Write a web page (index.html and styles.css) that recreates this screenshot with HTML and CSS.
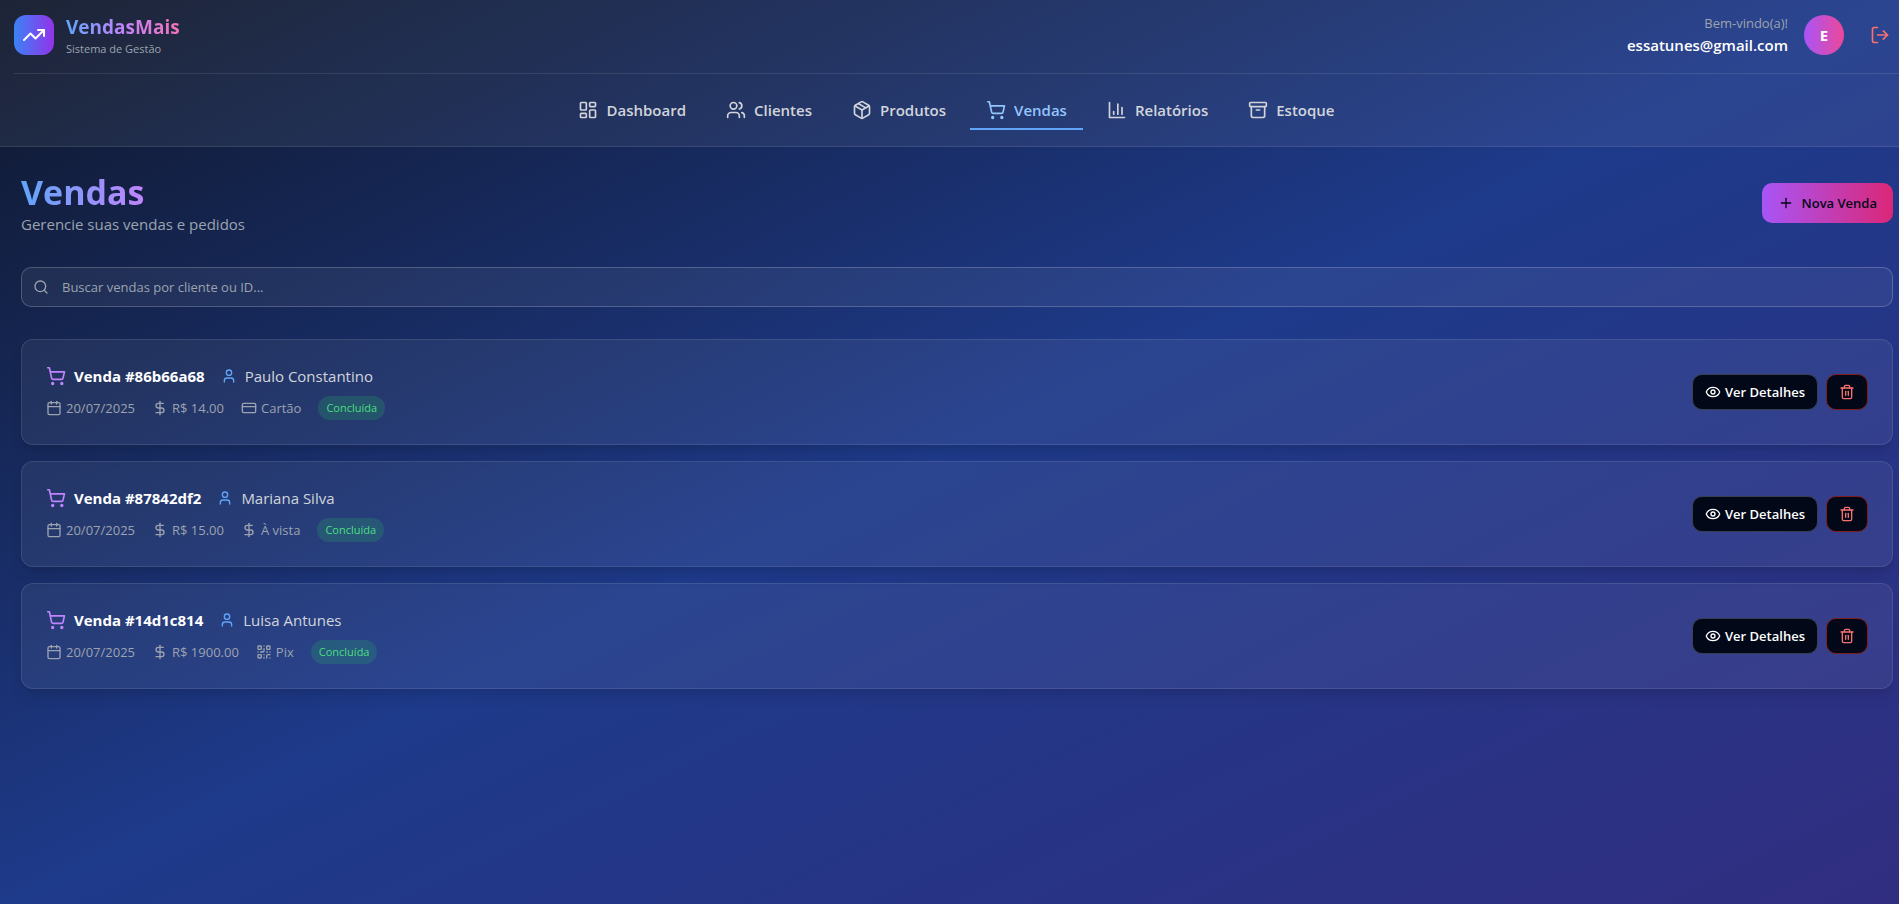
FILE: index.html
```html
<!DOCTYPE html>
<html lang="pt-BR">
<head>
<meta charset="utf-8">
<meta name="viewport" content="width=device-width, initial-scale=1">
<title>VendasMais</title>
<link rel="stylesheet" href="styles.css">
</head>
<body>
<svg class="sprite" aria-hidden="true">
  <symbol id="i-trend" viewBox="0 0 24 24"><path d="M22 7l-8.5 8.5-5-5L2 17"/><path d="M16 7h6v6"/></symbol>
  <symbol id="i-logout" viewBox="0 0 24 24"><path d="M9 21H5a2 2 0 0 1-2-2V5a2 2 0 0 1 2-2h4"/><path d="M16 17l5-5-5-5"/><path d="M21 12H9"/></symbol>
  <symbol id="i-dash" viewBox="0 0 24 24"><rect width="7" height="9" x="3" y="3" rx="1"/><rect width="7" height="5" x="14" y="3" rx="1"/><rect width="7" height="9" x="14" y="12" rx="1"/><rect width="7" height="5" x="3" y="16" rx="1"/></symbol>
  <symbol id="i-clients" viewBox="0 0 24 24"><path d="M16 21v-2a4 4 0 0 0-4-4H6a4 4 0 0 0-4 4v2"/><circle cx="9" cy="7" r="4"/><path d="M22 21v-2a4 4 0 0 0-3-3.87"/><path d="M16 3.13a4 4 0 0 1 0 7.75"/></symbol>
  <symbol id="i-package" viewBox="0 0 24 24"><path d="M7.5 4.27l9 5.15"/><path d="M21 8a2 2 0 0 0-1-1.73l-7-4a2 2 0 0 0-2 0l-7 4A2 2 0 0 0 3 8v8a2 2 0 0 0 1 1.73l7 4a2 2 0 0 0 2 0l7-4A2 2 0 0 0 21 16Z"/><path d="M3.3 7l8.7 5 8.7-5"/><path d="M12 22V12"/></symbol>
  <symbol id="i-cart" viewBox="0 0 24 24"><circle cx="8" cy="21" r="1"/><circle cx="19" cy="21" r="1"/><path d="M2.05 2.05h2l2.66 12.42a2 2 0 0 0 2 1.58h9.78a2 2 0 0 0 1.95-1.57l1.65-7.43H5.12"/></symbol>
  <symbol id="i-chart" viewBox="0 0 24 24"><path d="M3 3v18h18"/><path d="M18 17V9"/><path d="M13 17V5"/><path d="M8 17v-3"/></symbol>
  <symbol id="i-archive" viewBox="0 0 24 24"><rect width="20" height="5" x="2" y="3" rx="1"/><path d="M4 8v11a2 2 0 0 0 2 2h12a2 2 0 0 0 2-2V8"/><path d="M10 12h4"/></symbol>
  <symbol id="i-plus" viewBox="0 0 24 24"><path d="M5 12h14"/><path d="M12 5v14"/></symbol>
  <symbol id="i-search" viewBox="0 0 24 24"><circle cx="11" cy="11" r="8"/><path d="M21 21l-4.3-4.3"/></symbol>
  <symbol id="i-user" viewBox="0 0 24 24"><path d="M19 21v-2a4 4 0 0 0-4-4H9a4 4 0 0 0-4 4v2"/><circle cx="12" cy="7" r="4"/></symbol>
  <symbol id="i-calendar" viewBox="0 0 24 24"><path d="M8 2v4"/><path d="M16 2v4"/><rect width="18" height="18" x="3" y="4" rx="2"/><path d="M3 10h18"/></symbol>
  <symbol id="i-dollar" viewBox="0 0 24 24"><path d="M12 2v20"/><path d="M17 5H9.5a3.5 3.5 0 0 0 0 7h5a3.5 3.5 0 0 1 0 7H6"/></symbol>
  <symbol id="i-card" viewBox="0 0 24 24"><rect width="20" height="14" x="2" y="5" rx="2"/><path d="M2 10h20"/></symbol>
  <symbol id="i-qr" viewBox="0 0 24 24"><rect width="5" height="5" x="3" y="3" rx="1"/><rect width="5" height="5" x="16" y="3" rx="1"/><rect width="5" height="5" x="3" y="16" rx="1"/><path d="M21 16h-3a2 2 0 0 0-2 2v3"/><path d="M21 21v.01"/><path d="M12 7v3a2 2 0 0 1-2 2H7"/><path d="M3 12h.01"/><path d="M12 3h.01"/><path d="M12 16v.01"/><path d="M16 12h1"/><path d="M21 12v.01"/><path d="M12 21v-1"/></symbol>
  <symbol id="i-eye" viewBox="0 0 24 24"><path d="M2.06 12.35a1 1 0 0 1 0-.7 10.75 10.75 0 0 1 19.88 0 1 1 0 0 1 0 .7 10.75 10.75 0 0 1-19.88 0"/><circle cx="12" cy="12" r="3"/></symbol>
  <symbol id="i-trash" viewBox="0 0 24 24"><path d="M3 6h18"/><path d="M19 6v14a2 2 0 0 1-2 2H7a2 2 0 0 1-2-2V6"/><path d="M8 6V4a2 2 0 0 1 2-2h4a2 2 0 0 1 2 2v2"/><path d="M10 11v6"/><path d="M14 11v6"/></symbol>
</svg>
<div class="page">
  <header class="header">
    <div class="topbar">
      <div class="brand">
        <span class="logo"><svg class="icon icon-logo"><use href="#i-trend"/></svg></span>
        <div>
          <div class="brand-name">VendasMais</div>
          <div class="brand-sub">Sistema de Gestão</div>
        </div>
      </div>
      <div class="account">
        <div class="account-text">
          <div class="welcome">Bem-vindo(a)!</div>
          <div class="email">essatunes@gmail.com</div>
        </div>
        <span class="avatar">E</span>
        <button class="logout" type="button" aria-label="Sair"><svg class="icon icon-md"><use href="#i-logout"/></svg></button>
      </div>
    </div>
    <nav class="nav" aria-label="Principal">
      <a class="nav-link" href="#dashboard"><svg class="icon icon-md"><use href="#i-dash"/></svg>Dashboard</a>
      <a class="nav-link" href="#clientes"><svg class="icon icon-md"><use href="#i-clients"/></svg>Clientes</a>
      <a class="nav-link" href="#produtos"><svg class="icon icon-md"><use href="#i-package"/></svg>Produtos</a>
      <a class="nav-link nav-active" href="#vendas" aria-current="page"><svg class="icon icon-md"><use href="#i-cart"/></svg>Vendas</a>
      <a class="nav-link" href="#relatorios"><svg class="icon icon-md"><use href="#i-chart"/></svg>Relatórios</a>
      <a class="nav-link" href="#estoque"><svg class="icon icon-md"><use href="#i-archive"/></svg>Estoque</a>
    </nav>
  </header>

  <main class="main">
    <div class="heading">
      <div>
        <h1 class="title">Vendas</h1>
        <p class="lead">Gerencie suas vendas e pedidos</p>
      </div>
      <button class="btn-new" type="button"><svg class="icon"><use href="#i-plus"/></svg>Nova Venda</button>
    </div>

    <div class="search">
      <svg class="icon search-icon"><use href="#i-search"/></svg>
      <input class="search-input" type="text" aria-label="Buscar vendas" placeholder="Buscar vendas por cliente ou ID...">
    </div>

    <div class="list">
      <article class="sale">
        <div class="sale-info">
          <div class="sale-top">
            <svg class="icon icon-md icon-purple"><use href="#i-cart"/></svg>
            <h2 class="sale-id">Venda #86b66a68</h2>
            <svg class="icon icon-client"><use href="#i-user"/></svg>
            <span class="client">Paulo Constantino</span>
          </div>
          <div class="sale-meta">
            <span class="meta"><svg class="icon"><use href="#i-calendar"/></svg>20/07/2025</span>
            <span class="meta"><svg class="icon"><use href="#i-dollar"/></svg>R$ 14.00</span>
            <span class="meta"><svg class="icon"><use href="#i-card"/></svg>Cartão</span>
            <span class="badge">Concluída</span>
          </div>
        </div>
        <div class="actions">
          <button class="btn" type="button"><svg class="icon"><use href="#i-eye"/></svg>Ver Detalhes</button>
          <button class="btn btn-delete" type="button" aria-label="Excluir venda"><svg class="icon"><use href="#i-trash"/></svg></button>
        </div>
      </article>

      <article class="sale">
        <div class="sale-info">
          <div class="sale-top">
            <svg class="icon icon-md icon-purple"><use href="#i-cart"/></svg>
            <h2 class="sale-id">Venda #87842df2</h2>
            <svg class="icon icon-client"><use href="#i-user"/></svg>
            <span class="client">Mariana Silva</span>
          </div>
          <div class="sale-meta">
            <span class="meta"><svg class="icon"><use href="#i-calendar"/></svg>20/07/2025</span>
            <span class="meta"><svg class="icon"><use href="#i-dollar"/></svg>R$ 15.00</span>
            <span class="meta"><svg class="icon"><use href="#i-dollar"/></svg>À vista</span>
            <span class="badge">Concluída</span>
          </div>
        </div>
        <div class="actions">
          <button class="btn" type="button"><svg class="icon"><use href="#i-eye"/></svg>Ver Detalhes</button>
          <button class="btn btn-delete" type="button" aria-label="Excluir venda"><svg class="icon"><use href="#i-trash"/></svg></button>
        </div>
      </article>

      <article class="sale">
        <div class="sale-info">
          <div class="sale-top">
            <svg class="icon icon-md icon-purple"><use href="#i-cart"/></svg>
            <h2 class="sale-id">Venda #14d1c814</h2>
            <svg class="icon icon-client"><use href="#i-user"/></svg>
            <span class="client">Luisa Antunes</span>
          </div>
          <div class="sale-meta">
            <span class="meta"><svg class="icon"><use href="#i-calendar"/></svg>20/07/2025</span>
            <span class="meta"><svg class="icon"><use href="#i-dollar"/></svg>R$ 1900.00</span>
            <span class="meta"><svg class="icon"><use href="#i-qr"/></svg>Pix</span>
            <span class="badge">Concluída</span>
          </div>
        </div>
        <div class="actions">
          <button class="btn" type="button"><svg class="icon"><use href="#i-eye"/></svg>Ver Detalhes</button>
          <button class="btn btn-delete" type="button" aria-label="Excluir venda"><svg class="icon"><use href="#i-trash"/></svg></button>
        </div>
      </article>
    </div>
  </main>
</div>
</body>
</html>
```
FILE: styles.css
```css
*, *::before, *::after { box-sizing: border-box; }
body {
  margin: 0;
  font-family: "Open Sans", "Noto Sans", sans-serif;
  font-size: 15px;
  line-height: 24px;
  color: #fff;
}
h1, h2, p { margin: 0; }
button, input { font: inherit; margin: 0; }
button { cursor: pointer; }

.sprite { display: none; }
.page {
  min-height: 100vh;
  background: linear-gradient(to bottom right, #0f172a, #1e3a8a, #312e81);
}

.icon {
  width: 16px;
  height: 16px;
  flex: none;
  fill: none;
  stroke: currentColor;
  stroke-width: 2;
  stroke-linecap: round;
  stroke-linejoin: round;
}
.icon-md { width: 20px; height: 20px; }
.icon-logo { width: 24px; height: 24px; }

/* Header */
.header {
  padding-left: 14px;
  background: rgba(255, 255, 255, 0.06);
  border-bottom: 1px solid rgba(255, 255, 255, 0.1);
}
.topbar {
  display: flex;
  align-items: center;
  justify-content: space-between;
  padding: 13px 0 16px;
  border-bottom: 1px solid rgba(255, 255, 255, 0.1);
}
.brand { display: flex; align-items: center; gap: 12px; }
.logo {
  display: grid;
  place-items: center;
  width: 40px;
  height: 40px;
  border-radius: 12px;
  background: linear-gradient(to right, #3b82f6, #9333ea);
}
.brand-name {
  width: max-content;
  font-size: 19px;
  font-weight: 700;
  line-height: 28px;
  background: linear-gradient(to right, #60a5fa, #c084fc, #f472b6);
  -webkit-background-clip: text;
  background-clip: text;
  color: transparent;
}
.brand-sub { font-size: 11px; line-height: 16px; color: #9ca3af; }
.account { display: flex; align-items: center; gap: 16px; text-align: right; }
.welcome { font-size: 13px; line-height: 20px; color: #9ca3af; }
.email { font-weight: 600; }
.avatar {
  display: grid;
  place-items: center;
  width: 40px;
  height: 40px;
  border-radius: 50%;
  background: linear-gradient(to right, #a855f7, #ec4899);
  font-weight: 700;
}
.logout {
  display: grid;
  place-items: center;
  width: 39px;
  height: 40px;
  padding: 0;
  border: 0;
  background: none;
  color: #f87171;
}

.nav {
  display: flex;
  justify-content: center;
  gap: 8px;
  padding: 16px 0;
}
.nav-link {
  display: flex;
  align-items: center;
  gap: 8px;
  padding: 8px 16px;
  font-weight: 600;
  color: #d1d5db;
  text-decoration: none;
}
.nav-active { color: #93c5fd; box-shadow: inset 0 -2px #60a5fa; }

/* Content */
.main { padding: 24px 6px 24px 21px; }
.heading {
  display: flex;
  align-items: center;
  justify-content: space-between;
  margin-bottom: 32px;
}
.title {
  width: max-content;
  font-size: 34px;
  font-weight: 700;
  line-height: 42px;
  background: linear-gradient(to right, #60a5fa, #c084fc);
  -webkit-background-clip: text;
  background-clip: text;
  color: transparent;
}
.lead { line-height: 22px; color: #9ca3af; }
.btn-new {
  display: flex;
  align-items: center;
  gap: 8px;
  height: 40px;
  padding: 0 16px;
  border: 0;
  border-radius: 10px;
  background: linear-gradient(to right, #a855f7, #db2777);
  color: #020817;
  font-size: 13px;
  font-weight: 600;
}

.search { position: relative; margin-bottom: 32px; }
.search-icon { position: absolute; left: 12px; top: 12px; color: #9ca3af; }
.search-input {
  display: block;
  width: 100%;
  height: 40px;
  padding: 0 12px 0 40px;
  border: 1px solid rgba(255, 255, 255, 0.2);
  border-radius: 10px;
  background: rgba(255, 255, 255, 0.06);
  color: #fff;
  font-size: 13px;
}
.search-input::placeholder { color: #9ca3af; opacity: 1; }

.list { display: grid; gap: 16px; }
.sale {
  display: flex;
  align-items: center;
  justify-content: space-between;
  padding: 24px;
  border: 1px solid rgba(255, 255, 255, 0.1);
  border-radius: 12px;
  background: rgba(255, 255, 255, 0.06);
  box-shadow: 0 10px 15px -3px rgba(0, 0, 0, 0.1), 0 4px 6px -4px rgba(0, 0, 0, 0.1);
}
.sale-info { display: grid; gap: 8px; }
.sale-top { display: flex; align-items: center; gap: 8px; }
.sale-id { font-size: 15px; font-weight: 700; line-height: 24px; }
.icon-purple { color: #c084fc; }
.icon-client { margin-left: 8px; color: #60a5fa; }
.client { color: #d1d5db; }
.sale-meta {
  display: flex;
  align-items: center;
  gap: 17px;
  font-size: 13px;
  color: #9ca3af;
}
.meta { display: flex; align-items: center; gap: 4px; }
.badge {
  padding: 0 8px;
  border-radius: 12px;
  background: rgba(34, 197, 94, 0.2);
  color: #4ade80;
  font-size: 11px;
}
.actions { display: flex; gap: 8px; }
.btn {
  display: flex;
  align-items: center;
  gap: 4px;
  height: 36px;
  padding: 0 12px;
  border: 1px solid #374151;
  border-radius: 10px;
  background: #020817;
  color: #fff;
  font-size: 13px;
  font-weight: 600;
}
.btn-delete { border-color: #7f1d1d; color: #f87171; }
```
